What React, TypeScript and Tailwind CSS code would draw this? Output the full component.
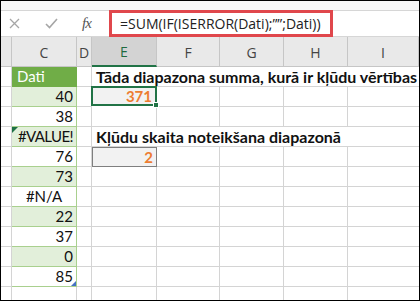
const cols = ["", "C", "D", "E", "F", "G", "H", "I"];

type Row = {
  c: string;
  tint?: boolean;
  head?: boolean;
  align?: "center" | "end";
  flag?: boolean;
  last?: boolean;
  e?: { kind: "title" | "sel" | "box"; v: string };
};

const rows: Row[] = [
  { c: "Dati", head: true, e: { kind: "title", v: "Tāda diapazona summa, kurā ir kļūdu vērtības" } },
  { c: "40", tint: true, e: { kind: "sel", v: "371" } },
  { c: "38" },
  { c: "#VALUE!", tint: true, flag: true, e: { kind: "title", v: "Kļūdu skaita noteikšana diapazonā" } },
  { c: "76", e: { kind: "box", v: "2" } },
  { c: "73", tint: true },
  { c: "#N/A", align: "center" },
  { c: "22", tint: true },
  { c: "37" },
  { c: "0", tint: true },
  { c: "85", last: true },
];

const grid = "grid grid-cols-[11px_65px_15px_65px_63px_64px_64px_1fr]";
const line = "border-[#d4d4d4]";

const DataCell = ({ r }: { r: Row }) => {
  if (r.head) {
    return (
      <div className="h-[20px] bg-[#70ad47] text-white pl-[5px] flex items-center border-r border-b border-[#70ad47]">
        {r.c}
      </div>
    );
  }
  return (
    <div
      className={`relative h-[20px] flex items-center border-r border-b border-[#a9d08e] px-[3px] ${
        r.tint ? "bg-[#e2efda]" : "bg-white"
      } ${r.align === "center" ? "justify-center" : "justify-end"} ${r.flag ? "tracking-[-0.6px]" : ""}`}
    >
      {r.flag && (
        <span className="absolute left-0 top-0 w-0 h-0 border-t-[6px] border-r-[6px] border-t-[#1e7145] border-r-transparent" />
      )}
      {r.c}
      {r.last && (
        <span className="absolute right-0 bottom-0 w-0 h-0 border-b-[5px] border-l-[5px] border-b-[#4472c4] border-l-transparent" />
      )}
    </div>
  );
};

export default function App() {
  return (
    <div className="w-[420px] h-[301px] border border-black bg-white overflow-hidden font-['Lato',sans-serif] text-[15px] text-[#111]">
      <div className="h-[9px] bg-[#f7f7f7]" />
      <div className="flex h-[27px]">
        <div className="w-[108px] flex items-center border-y border-[#d6d6d6] bg-white">
          <svg width="11" height="11" viewBox="0 0 11 11" className="ml-[8px]" fill="none" stroke="#a6a6a6" strokeWidth="1.3">
            <path d="M1 1L10 10M10 1L1 10" />
          </svg>
          <svg width="13" height="11" viewBox="0 0 13 11" className="ml-[25px]" fill="none" stroke="#a6a6a6" strokeWidth="1.6">
            <path d="M1 6L4.5 9.5L12 1" />
          </svg>
          <span className="ml-[24px] italic text-[15px] text-[#555] font-['Liberation_Serif',serif] tracking-[-1px]">
            fx
          </span>
        </div>
        <div className="w-[224px] h-full border-[3px] border-[#e0474c] bg-white flex items-center pl-2 font-['Open_Sans',sans-serif] text-[14px] text-[#222] whitespace-nowrap">
          =SUM(IF(ISERROR(Dati);””;Dati))
        </div>
        <div className="flex-1 border-y border-[#d6d6d6] bg-white" />
      </div>
      <div className={`${grid} h-[30px] bg-[#e9e9e9] border-b border-[#c6c6c6] font-['Open_Sans',sans-serif] text-[14px] text-[#444]`}>
        {cols.map((c) => (
          <div
            key={c || "b"}
            className={`flex items-end justify-center pb-[3px] border-r border-[#c6c6c6] ${
              c === "E" ? "bg-[#d3d3d3] text-[#1e6b3f] border-b-2 border-b-[#217346] -mb-px" : ""
            }`}
          >
            {c}
          </div>
        ))}
      </div>
      {rows.map((r, i) => (
        <div key={i} className={grid}>
          <div className={`h-[20px] border-r border-b ${line}`} />
          <DataCell r={r} />
          <div className={`h-[20px] border-r border-b ${line}`} />
          {r.e?.kind === "title" ? (
            <div className={`col-span-5 h-[20px] border-b ${line} flex items-center pl-[4px] font-bold text-[16px] whitespace-nowrap`}>
              {r.e.v}
            </div>
          ) : (
            <>
              {r.e?.kind === "sel" ? (
                <div className="relative h-[20px] border-2 border-[#217346] bg-[#f2f2f2] flex items-center justify-end pr-[3px] font-bold text-[#ed7d31] -mt-px -ml-px">
                  {r.e.v}
                  <span className="absolute -right-[4px] -bottom-[4px] w-[6px] h-[6px] bg-[#217346] border border-white" />
                </div>
              ) : r.e?.kind === "box" ? (
                <div className="h-[20px] border border-[#7f7f7f] bg-[#f2f2f2] flex items-center justify-end pr-[3px] font-bold text-[#ed7d31]">
                  {r.e.v}
                </div>
              ) : (
                <div className={`h-[20px] border-r border-b ${line}`} />
              )}
              <div className={`h-[20px] border-r border-b ${line}`} />
              <div className={`h-[20px] border-r border-b ${line}`} />
              <div className={`h-[20px] border-r border-b ${line}`} />
              <div className={`h-[20px] border-b ${line}`} />
            </>
          )}
        </div>
      ))}
      <div className={grid}>
        <div className={`h-[20px] border-r ${line}`} />
        <div className={`h-[20px] border-r ${line}`} />
        <div className={`h-[20px] border-r ${line}`} />
        <div className={`h-[20px] border-r ${line}`} />
        <div className={`h-[20px] border-r ${line}`} />
        <div className={`h-[20px] border-r ${line}`} />
        <div className={`h-[20px] border-r ${line}`} />
        <div className="h-[20px]" />
      </div>
    </div>
  );
}
